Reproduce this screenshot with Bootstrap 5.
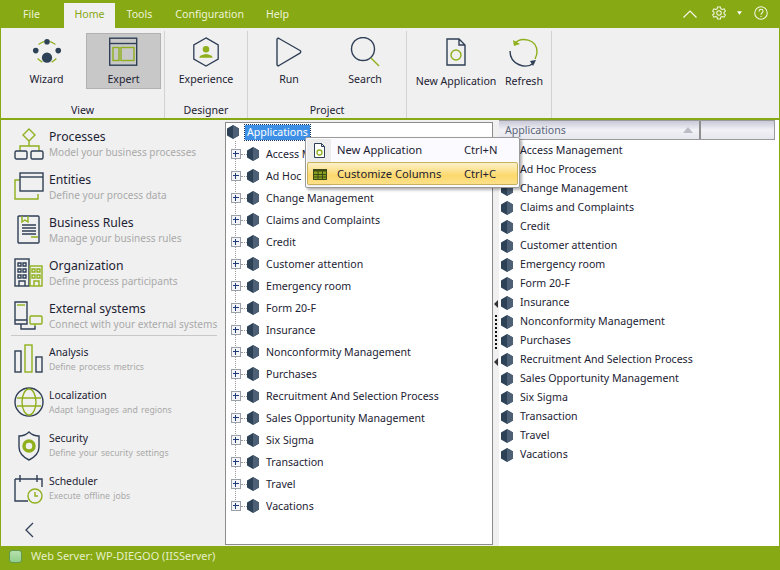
<!DOCTYPE html>
<html lang="en"><head><meta charset="utf-8"><title>Applications</title>
<link href="https://cdn.jsdelivr.net/npm/bootstrap@5.3.0/dist/css/bootstrap.min.css" rel="stylesheet">
<style>
html,body{margin:0;height:100%;overflow:hidden}
body{width:780px;height:570px;background:#87a913;font-family:"Noto Sans","Open Sans",sans-serif;font-size:10.6px;color:#1c2233;line-height:1.2;position:relative}
.topbar{height:28px;padding-top:3px}
.tabitem{color:#eef3d8;height:25px;padding:5px 11.5px 0;white-space:nowrap}
.tabitem.first{width:64px;padding-left:23px;padding-right:0}
.tabitem.on{background:#f0f0f0;color:#87a913;padding:5px 0 0;width:51px}
.tabitem.last{margin-left:-1px}
.winicons{padding-right:12px;padding-top:3px}
.gapgear{margin-left:15px}
.gapcaret{margin-left:11px}
.gaphelp{margin-left:12px}
.ribbon{height:90px;margin:0 1px;background:#f0f0f0;width:778px}
.rgroup{height:87px;margin-top:3px;border-right:1px solid #d2d2d2;flex:none}
.rbtns{height:58px;margin-top:2px}
.rbtn{width:75px;height:56px;padding-top:3px;flex:none;text-align:center;border:1px solid transparent}
.rbtn.active{background:#c8c8c8;border-color:#b2b2b2;margin-left:2px}
.rbtn svg{display:block;margin:0 auto;height:30px}
.rbtn span{display:block;margin-top:6px;white-space:nowrap}
.rbtn.low span{margin-top:8px}
.rbtn.wide{width:86px}
.rbtn.narrow{width:50px}
.rbtns.projstart{padding-left:3px}
.rbtns.projstart .rbtn{width:76px}
.rbtns.laststart{padding-left:6px}
.rlabel{text-align:center;margin-top:13px}
.mainarea{height:426px;margin:2px 1px 0;background:#f0f0f0;width:778px}
.sidecol{width:222px;flex:none;padding:8px 0 0 13px}
.sideitem{height:43px}
.sideitem svg{width:30px;height:32px;flex:none;margin-right:5px}
.sidetitle{font-size:12.2px;line-height:17px;white-space:nowrap}
.sidesub{font-size:10.05px;color:#a9a9a9;white-space:nowrap;line-height:14px}
.sideitem.lite .sidetitle{font-size:10.4px;line-height:17px}
.sideitem.lite .sidesub{font-size:8.7px;line-height:12px;word-spacing:1px}
.siderule{height:1px;background:#c8c8c8;margin:-8px 6px 8px -3px}
.sideback{margin:6px 0 0 10px;display:block}
.treepane{width:268px;height:423px;margin-top:2px;background:#fff;border:1px solid #8c8c8c;flex:none;position:relative;margin-left:2px}
.treetop{height:20px;padding:0 0 2px 1px;gap:6px}
.treesel{background:#3d8fe6;color:#fff;padding:0 2px;height:15px;line-height:15px;outline:1px dotted #12325c}
.treeline{position:absolute;left:9px;top:18px;height:367px;border-left:1px dotted #9a9a9a}
.treerow{height:22px;padding-left:5px;white-space:nowrap;position:relative}
.plusbox{width:10px;height:10px;border:1px solid #9a9fa8;background:#f4f5f8;position:relative;flex:none}
.plusbox::before{content:"";position:absolute;left:1px;right:1px;top:3px;height:2px;border-top:1px solid #1f3a78}
.plusbox::after{content:"";position:absolute;top:1px;bottom:1px;left:3px;width:2px;border-left:1px solid #1f3a78}
.treedots{width:6px;border-top:1px dotted #9a9a9a;flex:none}
.hexmark{width:12px;height:14px;flex:none}
.treerow .hexmark{margin-right:7px}
.splitgap{width:6px;flex:none;position:relative}
.splitarrow{position:absolute;left:1px;width:0;height:0;border:4px solid transparent;border-left:0;border-right:4px solid #333}
.arrowone{top:180px}
.arrowtwo{top:238px}
.splitdots{position:absolute;left:2px;top:195px;height:34px;border-left:2px dotted #111}
.listpane{width:280px;flex:none;background:#fff;height:426px}
.headrow{height:20px;background:linear-gradient(#c9c9d8,#f1f1f6 50%,#e6e6ee);border:1px solid #9a9a9a;border-width:1px 1px 1px 0;color:#5a6478;width:276px}
.headcell{width:202px;padding:3px 0 0 6px;position:relative;border-right:2px solid #8f8f8f}
.headsort{position:absolute;right:6px;top:6px;border:5px solid transparent;border-top:0;border-bottom:6px solid #bcbcc6}
.listbody{padding-top:1px}
.listrow{height:19px;padding-left:2px;white-space:nowrap}
.listrow .hexmark{margin-right:7px}
.ctxmenu{position:absolute;left:305px;top:137px;width:215px;height:51px;background:#fbfaff;border:1px solid #9a9a9a;border-radius:2px;box-shadow:2px 2px 3px rgba(0,0,0,.3);z-index:5;padding:0 1px 1px}
.ctxstrip{position:absolute;left:1px;top:1px;bottom:1px;width:24px;background:#ececec}
.ctxrow{height:24px;position:relative;font-size:11.2px}
.ctxrow.on{background:linear-gradient(#fbf0c8,#fdd96c 60%,#fce08a);border:1px solid #c7b05e;border-radius:2px;height:23px}
.ctxicon{width:24px;flex:none;text-align:center}
.ctxname{margin-left:6px;width:127px}
.on .ctxicon{width:23px}
.statusbar{height:24px;padding:0 0 4px 9px;color:#e4efc8;font-size:11px;gap:9px}
.statusled{width:13px;height:13px;background:linear-gradient(#b5e0ad,#93cf8c);border:1px solid #5f9a4f;border-radius:3px;flex:none}
.ink{fill:none;stroke:#2f3f55;stroke-width:1.4}
.lime{fill:none;stroke:#8fb01c;stroke-width:1.4}
</style></head><body>
<svg width="0" height="0" class="position-absolute"><defs>
<symbol id="hex" viewBox="0 0 12 14"><polygon points="6,0 12,3.5 12,10.5 6,14 0,10.5 0,3.5" fill="#2e4257"/><polygon points="6,0 12,3.5 12,10.5 6,14" fill="#4d6075"/></symbol>
</defs></svg>

<div class="topbar d-flex align-items-start">
 <div class="tabitem first">File</div>
 <div class="tabitem on text-center">Home</div>
 <div class="tabitem">Tools</div>
 <div class="tabitem">Configuration</div>
 <div class="tabitem last">Help</div>
 <div class="winicons ms-auto d-flex align-items-center">
  <svg width="14" height="9" viewBox="0 0 14 9" fill="none" stroke="#f4f7e6" stroke-width="1.2"><path d="M.5 8.500 7 2l6.500 6.500"/></svg>
  <svg class="gapgear" width="14" height="14" viewBox="0 0 15 15" fill="none" stroke="#f4f7e6" stroke-width="1.1"><path d="M6 1h3l.5 2 1.600.8 2-.8 1.300 2.400-1.500 1.300v1.600l1.500 1.300L13 12l-2-.8-1.600.8L9 14H6l-.5-2-1.600-.8-2 .8L.7 9.600l1.500-1.300V6.700L.7 5.400 2 3l2 .8L5.500 3z"/><circle cx="7.500" cy="7.500" r="2.400"/></svg>
  <svg class="gapcaret" width="5" height="4" viewBox="0 0 6 4" fill="#fff"><path d="M0 0h6L3 4z"/></svg>
  <svg class="gaphelp" width="14" height="14" viewBox="0 0 15 15" fill="none" stroke="#f4f7e6" stroke-width="1.1"><circle cx="7.500" cy="7.500" r="6.700"/><path d="M5.400 5.800c0-3 4.300-2.800 4.300-.2 0 1.800-2.200 1.700-2.200 3.800"/><path d="M7.500 10.600v1.200"/></svg>
 </div>
</div>

<div class="ribbon d-flex">
 <div class="rgroup" style="width:164px">
  <div class="rbtns d-flex ps-2">
   <div class="rbtn"><svg width="30" height="30" viewBox="0 0 32 32"><path class="lime" d="M7 8c3-2 5-3 6-3M25 8c-3-2-5-3-6-3M6 23c2 2 4 3 5 4M26 23c-2 2-4 3-5 4" stroke-width="1"/><circle cx="16" cy="5" r="3" fill="#2e4257"/><circle cx="4" cy="14.500" r="3" fill="#2e4257"/><circle cx="28" cy="14.500" r="3" fill="#2e4257"/><circle cx="16" cy="22" r="5.500" fill="#2e4257"/></svg><span>Wizard</span></div>
   <div class="rbtn active"><svg width="29" height="29" viewBox="0 0 29 29"><rect x=".7" y=".7" width="27" height="27" class="ink"/><path class="ink" d="M.7 6h27"/><rect x="4" y="10" width="6" height="13" class="lime"/><rect x="12" y="10" width="13" height="13" class="lime"/></svg><span>Expert</span></div>
  </div>
  <div class="rlabel">View</div>
 </div>
 <div class="rgroup" style="width:83px">
  <div class="rbtns d-flex justify-content-center">
   <div class="rbtn"><svg width="28" height="32" viewBox="0 0 28 32"><polygon class="ink" points="14,1 27,8.500 27,23.500 14,31 1,23.500 1,8.500"/><circle cx="14" cy="13" r="3.500" fill="#8fb01c"/><path d="M7 22c0-3 4-3 7-4 3 1 7 1 7 4z" fill="#8fb01c"/></svg><span>Experience</span></div>
  </div>
  <div class="rlabel">Designer</div>
 </div>
 <div class="rgroup" style="width:159px">
  <div class="rbtns projstart d-flex">
   <div class="rbtn"><svg width="26" height="30" viewBox="0 0 26 30"><path class="ink" d="M1 2.500c0-1 1-1.500 2-1l21 12c1 .6 1 2 0 2.600L3 28.500c-1 .5-2 0-2-1z"/></svg><span>Run</span></div>
   <div class="rbtn"><svg width="30" height="30" viewBox="0 0 30 30"><circle cx="13" cy="12" r="11.500" class="ink"/><path class="lime" d="M21 21l8 8"/></svg><span>Search</span></div>
  </div>
  <div class="rlabel">Project</div>
 </div>
 <div class="rgroup" style="width:145px">
  <div class="rbtns laststart d-flex">
   <div class="rbtn low wide"><svg width="20" height="28" viewBox="0 0 20 28"><path class="ink" d="M1 1h12l6 6v20H1zM13 1v6h6"/><circle cx="10" cy="17" r="5" class="lime"/></svg><span>New Application</span></div>
   <div class="rbtn low narrow"><svg width="30" height="30" viewBox="0 0 30 30"><path class="lime" d="M5 7C12-1 28 2 28 15c0 3-1 5-2 7"/><path d="M4 3l1 6 6-2z" fill="#8fb01c"/><path class="ink" d="M1 14c0 13 15 19 24 12"/><path d="M27 23l-3 6-3-5z" fill="#2f3f55"/></svg><span>Refresh</span></div>
  </div>
  <div class="rlabel">&nbsp;</div>
 </div>
</div>

<div class="mainarea d-flex">
 <div class="sidecol">
  <div class="sideitem d-flex"><svg viewBox="0 0 30 32"><path class="lime" d="M15 1l6 6-6 6-6-6zM15 13v5M6 23v-5h19v5"/><rect x="1" y="23" width="12" height="8" rx="1.500" class="ink"/><rect x="17" y="23" width="12" height="8" rx="1.500" class="ink"/></svg><div><div class="sidetitle">Processes</div><div class="sidesub">Model your business processes</div></div></div>
  <div class="sideitem d-flex"><svg viewBox="0 0 30 32"><path class="lime" d="M6 9H1v19h23v-5"/><rect x="6" y="2" width="23" height="18" class="ink" fill="#f0f0f0"/><path class="ink" d="M6 6h23"/></svg><div><div class="sidetitle">Entities</div><div class="sidesub">Define your process data</div></div></div>
  <div class="sideitem d-flex"><svg viewBox="0 0 30 32"><rect x="4" y="2" width="21" height="27" rx="1" class="ink"/><path class="lime" d="M8 2v6l3-2 3 2V2M17 23h7"/><path class="ink" d="M8 11h14M8 14h14M8 17h14M8 20h14" stroke-width="1"/></svg><div><div class="sidetitle">Business Rules</div><div class="sidesub">Manage your business rules</div></div></div>
  <div class="sideitem d-flex"><svg viewBox="0 0 30 32"><rect x="1" y="2" width="14" height="27" class="ink"/><path class="ink" d="M4 6h3v3H4zM9 6h3v3H9zM4 12h3v3H4zM9 12h3v3H9zM4 18h3v3H4zM9 18h3v3H9zM5 29v-5h6v5" stroke-width="1"/><rect x="16" y="9" width="12" height="20" class="lime"/><path class="lime" d="M18 12h3v3h-3zM23 12h3v3h-3zM18 18h3v3h-3zM23 18h3v3h-3zM20 29v-5h5v5" stroke-width="1"/></svg><div><div class="sidetitle">Organization</div><div class="sidesub">Define process participants</div></div></div>
  <div class="sideitem d-flex"><svg viewBox="0 0 30 32"><path class="ink" d="M1 2h12v22H1zM1 20h12M7 24v5h14v-3"/><path class="lime" d="M3 5h8"/><rect x="16" y="16" width="12" height="8" rx="1" class="lime"/><path class="lime" d="M21 24v2"/></svg><div><div class="sidetitle">External systems</div><div class="sidesub">Connect with your external systems</div></div></div>
  <div class="siderule"></div>
  <div class="sideitem lite d-flex"><svg viewBox="0 0 30 32"><rect x="1" y="7" width="6" height="21" class="ink"/><rect x="11" y="1" width="7" height="27" class="lime"/><rect x="22" y="13" width="6" height="15" class="ink"/></svg><div><div class="sidetitle">Analysis</div><div class="sidesub">Define process metrics</div></div></div>
  <div class="sideitem lite d-flex"><svg viewBox="0 0 30 32"><circle cx="15" cy="15" r="14" class="ink"/><ellipse cx="15" cy="15" rx="7" ry="13" class="lime"/><path class="lime" d="M3 11h24M3 19h24"/></svg><div><div class="sidetitle">Localization</div><div class="sidesub">Adapt languages and regions</div></div></div>
  <div class="sideitem lite d-flex"><svg viewBox="0 0 30 32"><path class="ink" d="M15 2c3 3 7 4 10 4v11c0 7-6 11-10 13-4-2-10-6-10-13V6c3 0 7-1 10-4z"/><circle cx="15" cy="16" r="5" fill="none" stroke="#8fb01c" stroke-width="3.500"/></svg><div><div class="sidetitle">Security</div><div class="sidesub">Define your security settings</div></div></div>
  <div class="sideitem lite d-flex"><svg viewBox="0 0 30 32"><path class="ink" d="M1 6h27v8M1 6v22h13M6 2v7M23 2v7"/><circle cx="21" cy="23" r="7" class="lime"/><path class="lime" d="M21 19v4h3"/></svg><div><div class="sidetitle">Scheduler</div><div class="sidesub">Execute offline jobs</div></div></div>
  <svg class="sideback" width="10" height="16" viewBox="0 0 10 16" fill="none" stroke="#2f3f55" stroke-width="1.300"><path d="M9 1 2 8l7 7"/></svg>
 </div>

 <div class="treepane">
  <div class="treeline"></div>
  <div class="treetop d-flex align-items-center"><svg class="hexmark"><use href="#hex"/></svg><span class="treesel">Applications</span></div>
  <div class="treerow d-flex align-items-center"><span class="plusbox"></span><span class="treedots"></span><svg class="hexmark"><use href="#hex"/></svg>Access Management</div>
  <div class="treerow d-flex align-items-center"><span class="plusbox"></span><span class="treedots"></span><svg class="hexmark"><use href="#hex"/></svg>Ad Hoc Process</div>
  <div class="treerow d-flex align-items-center"><span class="plusbox"></span><span class="treedots"></span><svg class="hexmark"><use href="#hex"/></svg>Change Management</div>
  <div class="treerow d-flex align-items-center"><span class="plusbox"></span><span class="treedots"></span><svg class="hexmark"><use href="#hex"/></svg>Claims and Complaints</div>
  <div class="treerow d-flex align-items-center"><span class="plusbox"></span><span class="treedots"></span><svg class="hexmark"><use href="#hex"/></svg>Credit</div>
  <div class="treerow d-flex align-items-center"><span class="plusbox"></span><span class="treedots"></span><svg class="hexmark"><use href="#hex"/></svg>Customer attention</div>
  <div class="treerow d-flex align-items-center"><span class="plusbox"></span><span class="treedots"></span><svg class="hexmark"><use href="#hex"/></svg>Emergency room</div>
  <div class="treerow d-flex align-items-center"><span class="plusbox"></span><span class="treedots"></span><svg class="hexmark"><use href="#hex"/></svg>Form 20-F</div>
  <div class="treerow d-flex align-items-center"><span class="plusbox"></span><span class="treedots"></span><svg class="hexmark"><use href="#hex"/></svg>Insurance</div>
  <div class="treerow d-flex align-items-center"><span class="plusbox"></span><span class="treedots"></span><svg class="hexmark"><use href="#hex"/></svg>Nonconformity Management</div>
  <div class="treerow d-flex align-items-center"><span class="plusbox"></span><span class="treedots"></span><svg class="hexmark"><use href="#hex"/></svg>Purchases</div>
  <div class="treerow d-flex align-items-center"><span class="plusbox"></span><span class="treedots"></span><svg class="hexmark"><use href="#hex"/></svg>Recruitment And Selection Process</div>
  <div class="treerow d-flex align-items-center"><span class="plusbox"></span><span class="treedots"></span><svg class="hexmark"><use href="#hex"/></svg>Sales Opportunity Management</div>
  <div class="treerow d-flex align-items-center"><span class="plusbox"></span><span class="treedots"></span><svg class="hexmark"><use href="#hex"/></svg>Six Sigma</div>
  <div class="treerow d-flex align-items-center"><span class="plusbox"></span><span class="treedots"></span><svg class="hexmark"><use href="#hex"/></svg>Transaction</div>
  <div class="treerow d-flex align-items-center"><span class="plusbox"></span><span class="treedots"></span><svg class="hexmark"><use href="#hex"/></svg>Travel</div>
  <div class="treerow d-flex align-items-center"><span class="plusbox"></span><span class="treedots"></span><svg class="hexmark"><use href="#hex"/></svg>Vacations</div>
 </div>

 <div class="splitgap"><span class="splitarrow arrowone"></span><span class="splitdots"></span><span class="splitarrow arrowtwo"></span></div>

 <div class="listpane">
  <div class="headrow d-flex"><div class="headcell">Applications<span class="headsort"></span></div></div>
  <div class="listbody">
   <div class="listrow d-flex align-items-center"><svg class="hexmark"><use href="#hex"/></svg>Access Management</div>
   <div class="listrow d-flex align-items-center"><svg class="hexmark"><use href="#hex"/></svg>Ad Hoc Process</div>
   <div class="listrow d-flex align-items-center"><svg class="hexmark"><use href="#hex"/></svg>Change Management</div>
   <div class="listrow d-flex align-items-center"><svg class="hexmark"><use href="#hex"/></svg>Claims and Complaints</div>
   <div class="listrow d-flex align-items-center"><svg class="hexmark"><use href="#hex"/></svg>Credit</div>
   <div class="listrow d-flex align-items-center"><svg class="hexmark"><use href="#hex"/></svg>Customer attention</div>
   <div class="listrow d-flex align-items-center"><svg class="hexmark"><use href="#hex"/></svg>Emergency room</div>
   <div class="listrow d-flex align-items-center"><svg class="hexmark"><use href="#hex"/></svg>Form 20-F</div>
   <div class="listrow d-flex align-items-center"><svg class="hexmark"><use href="#hex"/></svg>Insurance</div>
   <div class="listrow d-flex align-items-center"><svg class="hexmark"><use href="#hex"/></svg>Nonconformity Management</div>
   <div class="listrow d-flex align-items-center"><svg class="hexmark"><use href="#hex"/></svg>Purchases</div>
   <div class="listrow d-flex align-items-center"><svg class="hexmark"><use href="#hex"/></svg>Recruitment And Selection Process</div>
   <div class="listrow d-flex align-items-center"><svg class="hexmark"><use href="#hex"/></svg>Sales Opportunity Management</div>
   <div class="listrow d-flex align-items-center"><svg class="hexmark"><use href="#hex"/></svg>Six Sigma</div>
   <div class="listrow d-flex align-items-center"><svg class="hexmark"><use href="#hex"/></svg>Transaction</div>
   <div class="listrow d-flex align-items-center"><svg class="hexmark"><use href="#hex"/></svg>Travel</div>
   <div class="listrow d-flex align-items-center"><svg class="hexmark"><use href="#hex"/></svg>Vacations</div>
  </div>
 </div>
</div>

<div class="ctxmenu">
 <div class="ctxstrip"></div>
 <div class="ctxrow d-flex align-items-center"><span class="ctxicon"><svg width="11" height="15" viewBox="0 0 11 15"><path d="M.5.500h7l3 3v11H.5zM7.500.500v3h3" fill="#fff" stroke="#2f3f55"/><circle cx="5.500" cy="9.500" r="2.500" fill="none" stroke="#8fb01c" stroke-width="1.300"/></svg></span><span class="ctxname">New Application</span><span>Ctrl+N</span></div>
 <div class="ctxrow on d-flex align-items-center"><span class="ctxicon"><svg width="14" height="11" viewBox="0 0 14 11"><rect width="14" height="11" fill="#8aa31e"/><rect width="14" height="2.500" fill="#3e4a14"/><path d="M.5.500h13v10H.5zM0 5.500h14M0 8h14M5 0v11M9.500 0v11" stroke="#3e4a14" fill="none" stroke-width="1"/></svg></span><span class="ctxname">Customize Columns</span><span>Ctrl+C</span></div>
</div>

<div class="statusbar d-flex align-items-center"><span class="statusled"></span><span>Web Server: WP-DIEGOO (IISServer)</span></div>
</body></html>
